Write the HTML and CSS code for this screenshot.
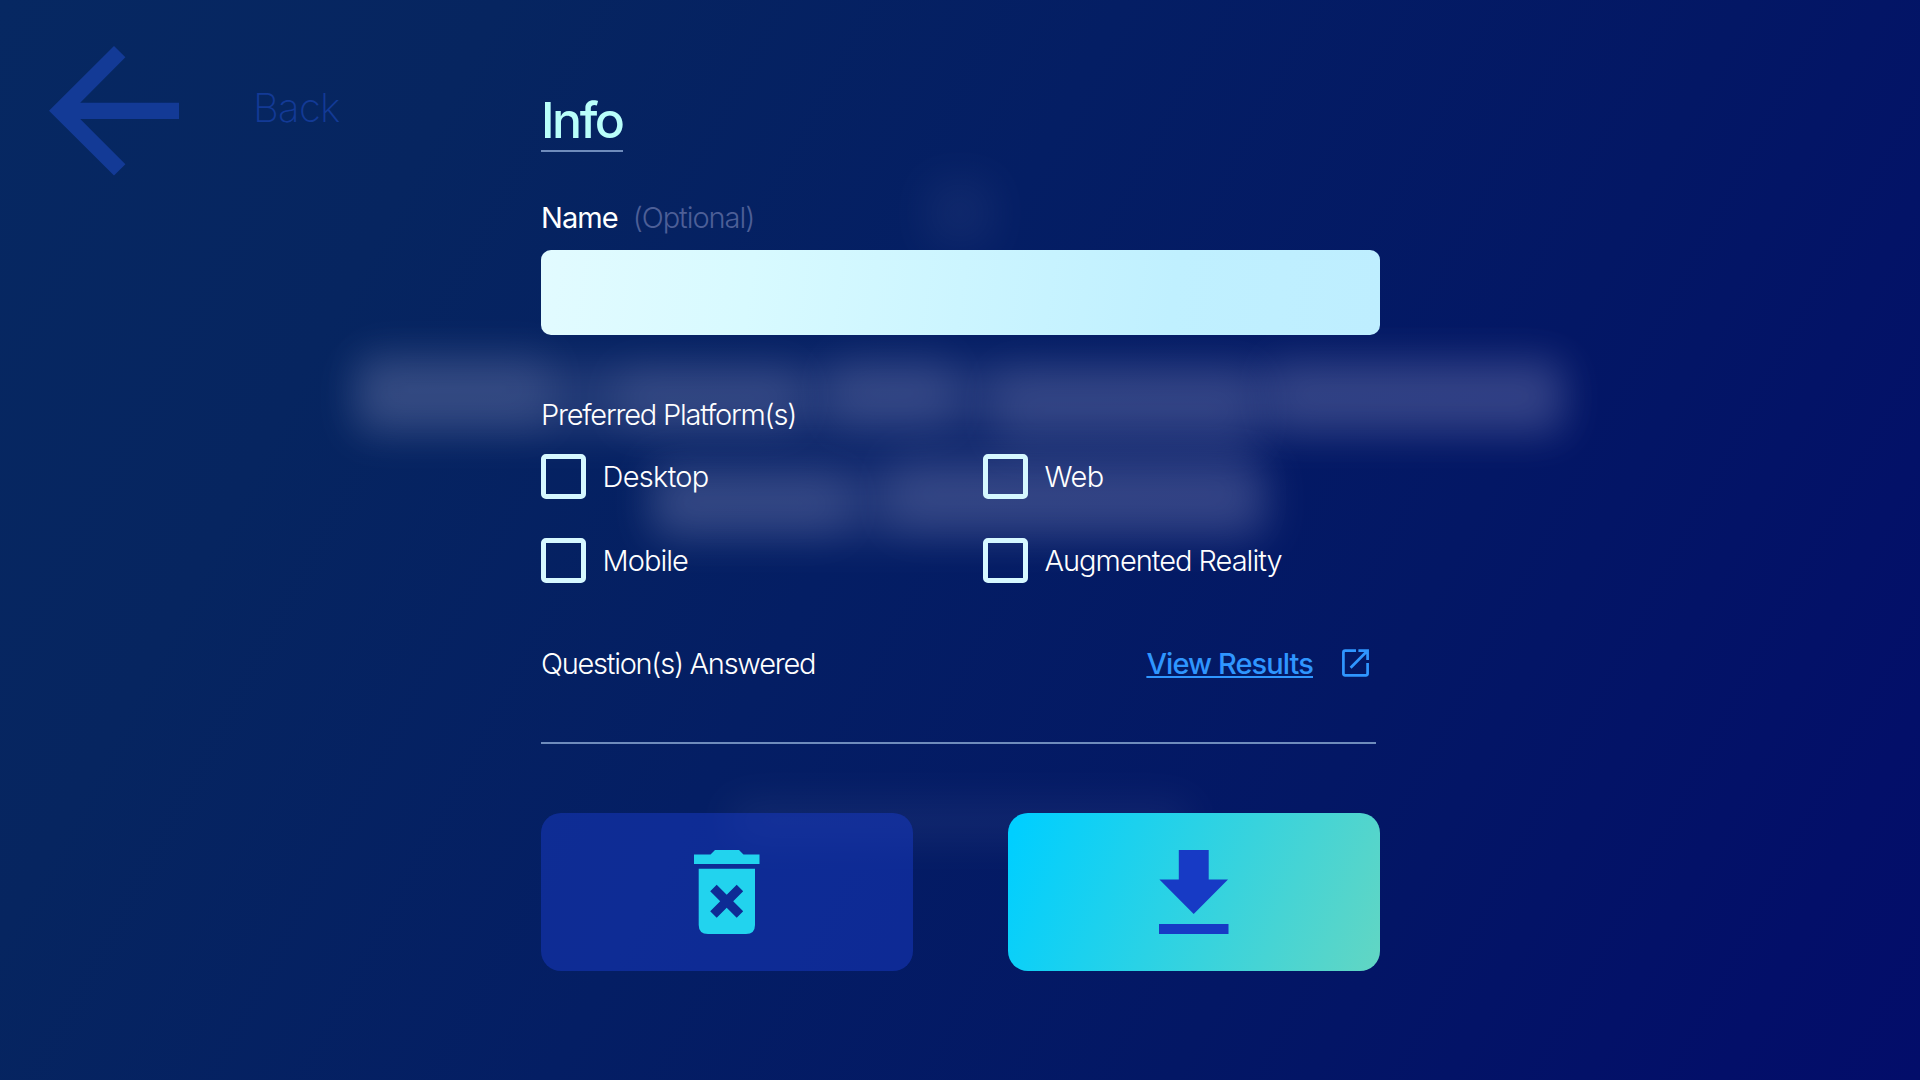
FILE: index.html
```html
<!DOCTYPE html>
<html lang="en">
<head>
<meta charset="utf-8">
<title>Info</title>
<link rel="stylesheet" href="styles.css">
</head>
<body>
<div class="backdrop" aria-hidden="true">
  <i class="haze dot"></i>
  <i class="haze line-one"></i><i class="haze line-two"></i>
  <i class="haze w1"></i><i class="haze w2"></i><i class="haze w3"></i><i class="haze w4"></i><i class="haze w5"></i>
  <i class="haze w6"></i><i class="haze w7"></i>
  <i class="haze foot"></i>
</div>
<div class="page">
  <a class="back">
    <svg width="130" height="130" viewBox="49 46 130 130"><path fill="#133a96" d="M49 110.7 114 46l11.4 11.3-45.2 45.4H179V119H80.2l45.2 45.3L114 175.5z"/></svg>
    <span class="back-label">Back</span>
  </a>
  <main class="panel">
    <h1 class="title">Info</h1>
    <label class="name-label"><span class="t-name">Name</span><span class="optional">(Optional)</span></label>
    <input class="name-input" type="text">
    <h2 class="platform-title">Preferred Platform(s)</h2>
    <div class="options">
      <label class="option"><i class="box"></i><span class="t-desktop">Desktop</span></label>
      <label class="option"><i class="box"></i><span class="t-web">Web</span></label>
      <label class="option"><i class="box"></i><span class="t-mobile">Mobile</span></label>
      <label class="option"><i class="box"></i><span class="t-ar">Augmented Reality</span></label>
    </div>
    <div class="answers">
      <span class="t-answered">Question(s) Answered</span>
      <a class="results"><span class="t-view">View Results</span>
        <svg width="28" height="28" viewBox="0 0 28 28" fill="none" stroke="#2f96ff" stroke-width="2.7"><path d="M14 1.6H3.2Q1.4 1.6 1.4 3.4V24.6Q1.4 26.4 3.2 26.4H23.8Q25.6 26.4 25.6 24.6V14M16.4 1.6H25.6V11M25 2.2 8.6 18.8"/></svg>
      </a>
    </div>
    <hr class="rule">
    <div class="actions">
      <button class="action discard"><svg width="66" height="84" viewBox="694 850 66 84"><path fill="#22d3ee" fill-rule="evenodd" d="M694 854.5h16.5l4.5-4.5h24l4.500 4.500h16v9.500H694zM698.700 868.700H755V925q0 9-9 9h-38q-9.300 0-9.300-9zM716.700 884.700l-6.500 6.500 10 10-10 10 6.500 6.500 10-10 10 10 6.500-6.500-10-10 10-10-6.500-6.500-10 10z"/></svg></button>
      <button class="action save"><svg width="70" height="84" viewBox="1159 850 70 84"><path fill="#173ac5" d="M1178.800 850h29.900v29.500H1228L1193.700 914l-34.300-34.500h19.400zM1159 924h69.500v10H1159z"/></svg></button>
    </div>
  </main>
</div>
</body>
</html>
```
FILE: styles.css
```css
* { box-sizing: border-box; }
body {
  margin: 0;
  width: 1920px;
  height: 1080px;
  overflow: hidden;
  position: relative;
  color: #fff;
  font: 350 29px/40px Inter, "Liberation Sans", sans-serif;
  background: linear-gradient(118deg, #062862 0%, #062560 20%, #041e64 45%, #031765 70%, #030f69 92%, #030d6a 100%);
}
.backdrop { position: absolute; inset: 0; }
.haze { position: absolute; background: #c6c4ea; filter: blur(20px); opacity: .11; border-radius: 10px; }
.dot { left: 925px; top: 178px; width: 70px; height: 70px; opacity: .06; }
.line-one { left: 354px; top: 362px; width: 1210px; height: 72px; opacity: .15; }
.line-two { left: 650px; top: 462px; width: 620px; height: 76px; opacity: .15; }
.w1 { left: 360px; top: 352px; width: 190px; height: 76px; }
.w2 { left: 618px; top: 368px; width: 180px; height: 60px; }
.w3 { left: 832px; top: 358px; width: 120px; height: 70px; }
.w4 { left: 996px; top: 370px; width: 260px; height: 78px; }
.w5 { left: 1270px; top: 360px; width: 290px; height: 70px; }
.w6 { left: 656px; top: 474px; width: 190px; height: 60px; }
.w7 { left: 890px; top: 456px; width: 365px; height: 76px; }
.foot { left: 730px; top: 802px; width: 460px; height: 38px; opacity: .08; }
.page { position: relative; display: flex; padding: 46px 0 0 49px; }
.back { width: 492px; display: flex; gap: 74px; color: #133a96; height: 130px; }
.back-label { font: 200 40px/48px Inter, sans-serif; padding-top: 38px; letter-spacing: -.7px; }
.panel { width: 839px; padding-top: 44px; }
h1, h2 { margin: 0; font: inherit; }
.title { display: table; height: 62px; border-bottom: 2px solid #6f8cbc; color: #b9fffa; font: 500 50px/60px Inter, sans-serif; width: 81.5px; letter-spacing: -2.5px; }
.name-label { display: flex; gap: 15px; margin-top: 46px; height: 52px; }
.t-name { font-weight: 400; letter-spacing: -.95px; }
.optional { color: #4d5f97; letter-spacing: -1.05px; }
.name-input { display: block; width: 839px; height: 85px; border: 0; border-radius: 10px; padding: 0 20px; background: linear-gradient(98deg, #e2fbff 0%, #d8faff 25%, #c0f0ff 75%, #beeeff 100%); }
.platform-title { margin-top: 60px; height: 59px; letter-spacing: -1.22px; }
.options { display: grid; grid-template-columns: 442px 397px; row-gap: 39px; }
.option { display: flex; align-items: center; gap: 17px; height: 45px; }
.box { width: 44.5px; height: 44.5px; border: 5px solid #d6f8ff; border-radius: 5px; }
.t-desktop { letter-spacing: -.7px; }
.t-web { letter-spacing: -.6px; }
.t-mobile { letter-spacing: -.95px; }
.t-ar { letter-spacing: -1px; }
.answers { display: flex; justify-content: space-between; margin-top: 61px; height: 98px; }
.t-answered { letter-spacing: -1.27px; }
.results { display: flex; gap: 29px; color: #2f96ff; font-weight: 500; padding-right: 10px; }
.t-view { letter-spacing: -.92px; text-decoration: underline; text-decoration-thickness: 2px; text-underline-offset: 2px; text-decoration-skip-ink: none; }
.results svg { margin-top: 5px; }
.rule { margin: 0; border: 0; height: 2px; width: 835px; background: #6f8cbc; }
.actions { display: flex; justify-content: space-between; margin-top: 69px; }
.action { width: 372px; height: 158px; border: 0; border-radius: 20px; padding: 0; display: flex; align-items: center; justify-content: center; }
.discard { background: rgba(23, 58, 197, .5); }
.save { background: linear-gradient(112deg, #00cfff 3%, #62d6c3 100%); }
```
